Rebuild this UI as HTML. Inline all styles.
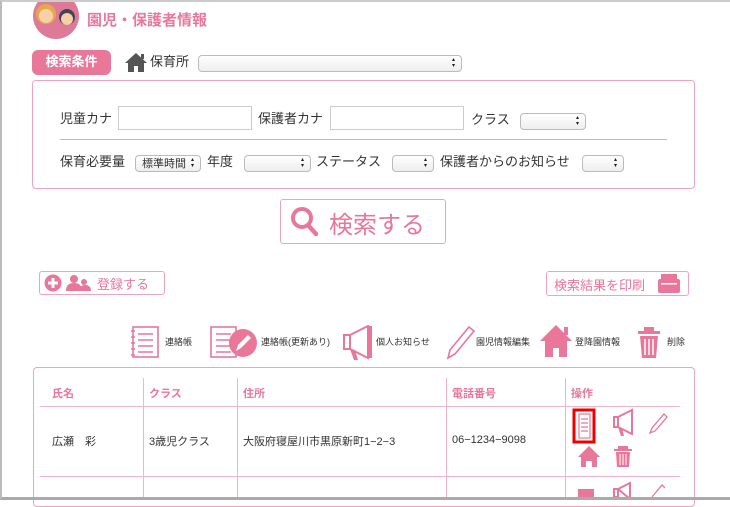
<!DOCTYPE html>
<html><head><meta charset="utf-8"><style>
*{box-sizing:border-box;margin:0;padding:0}
body{width:730px;height:500px;overflow:hidden;background:#fff;font-family:"Liberation Sans","Noto Sans CJK JP",sans-serif;color:#333;position:relative}
.a{position:absolute}
.frame{left:0;top:0;width:730px;height:500px;border-left:2px solid #bbb;border-top:2px solid #ccc;border-bottom:3px solid #aaa;z-index:5}
.pk{color:#e8779a}
.sel{position:absolute;height:17px;border:1px solid #bbb;border-radius:4px;background:linear-gradient(#fff,#eee);font-size:11px}
.sel:after{content:"▴▾";position:absolute;right:4px;top:1px;font-size:6px;line-height:6px;width:5px;color:#222;word-break:break-all}
.inp{position:absolute;height:24px;border:1px solid #ccc;background:#fff}
.lb{position:absolute;font-size:13px;color:#333;line-height:16px}
.btn{position:absolute;border:1.5px solid #eea4ba;border-radius:3px;background:#fff;color:#e8779a}
.th{position:absolute;top:385px;font-size:11px;font-weight:bold;color:#e8779a}
.td{position:absolute;top:433px;font-size:11px;color:#333}
.vl{position:absolute;top:378px;width:1px;height:122px;background:#f2b4c6}
.hl{position:absolute;left:40px;width:640px;height:1px;background:#f2b4c6}
.leg{position:absolute;top:335px;font-size:9px;color:#333}
</style></head><body>
<div class="a frame"></div>
<svg class="a" style="left:32px;top:-6px" width="48" height="48" viewBox="0 0 48 48">
<circle cx="24" cy="22" r="23" fill="#de7a98"/>
<circle cx="14" cy="20" r="10" fill="#e3a94a"/><circle cx="14" cy="22" r="7" fill="#f7d0a8"/>
<circle cx="35" cy="23" r="8" fill="#445"/><circle cx="35" cy="25" r="6" fill="#f7d0a8"/>
</svg>
<div class="a pk" style="left:87px;top:9px;font-size:15px;font-weight:bold">園児・保護者情報</div>
<div class="a" style="left:32px;top:50px;width:79px;height:25px;background:#e8779a;border-radius:6px;color:#fff;font-size:13px;font-weight:bold;text-align:center;line-height:24px">検索条件</div>
<svg class="a" style="left:125px;top:52px" width="22" height="20" viewBox="0 0 22 20"><path d="M11 1L0 11h3v9h6v-6h4v6h6v-9h3z" fill="#555"/><rect x="16" y="2" width="3" height="5" fill="#555"/></svg>
<div class="lb" style="left:150px;top:54px">保育所</div>
<div class="sel" style="left:198px;top:55px;width:264px"></div>
<div class="a" style="left:32px;top:80px;width:663px;height:109px;border:1px solid #eea4ba;border-radius:4px"></div>
<div class="lb" style="left:60px;top:111px">児童カナ</div>
<div class="inp" style="left:118px;top:106px;width:134px"></div>
<div class="lb" style="left:258px;top:111px">保護者カナ</div>
<div class="inp" style="left:330px;top:106px;width:134px"></div>
<div class="lb" style="left:471px;top:112px">クラス</div>
<div class="sel" style="left:520px;top:113px;width:66px"></div>
<div class="a" style="left:60px;top:139px;width:607px;height:1px;background:#eea4ba"></div>
<div class="lb" style="left:60px;top:154px">保育必要量</div>
<div class="sel" style="left:135px;top:155px;width:66px;padding-left:6px;line-height:16px">標準時間</div>
<div class="lb" style="left:207px;top:154px">年度</div>
<div class="sel" style="left:244px;top:155px;width:67px"></div>
<div class="lb" style="left:316px;top:154px">ステータス</div>
<div class="sel" style="left:392px;top:155px;width:42px"></div>
<div class="lb" style="left:440px;top:154px">保護者からのお知らせ</div>
<div class="sel" style="left:582px;top:155px;width:42px"></div>
<div class="btn" style="left:280px;top:199px;width:166px;height:45px"></div>
<svg class="a" style="left:290px;top:206px" width="30" height="32" viewBox="0 0 30 32"><circle cx="12" cy="12" r="9" fill="none" stroke="#e8779a" stroke-width="4"/><path d="M18 19l8 9" stroke="#e8779a" stroke-width="4.5" stroke-linecap="round"/></svg>
<div class="a pk" style="left:329px;top:205px;font-size:24px">検索する</div>
<div class="btn" style="left:39px;top:271px;width:126px;height:24px"></div>
<svg class="a" style="left:44px;top:274px" width="48" height="18" viewBox="0 0 48 18"><circle cx="9" cy="9" r="8.5" fill="#e8779a"/><path d="M9 4v10M4 9h10" stroke="#fff" stroke-width="3"/><circle cx="30" cy="5" r="4" fill="#e8779a"/><path d="M22 17c0-6 3-8 8-8s8 2 8 8z" fill="#e8779a"/><circle cx="40" cy="8" r="3" fill="#e8779a"/><path d="M36 17c0-5 2-6 5-6s6 1 6 6z" fill="#e8779a"/></svg>
<div class="a pk" style="left:97px;top:274px;font-size:13px">登録する</div>
<div class="btn" style="left:546px;top:271px;width:143px;height:25px"></div>
<div class="a pk" style="left:554px;top:275px;font-size:13px">検索結果を印刷</div>
<svg class="a" style="left:658px;top:274px" width="22" height="19" viewBox="0 0 22 19"><rect x="3" y="0" width="16" height="8" fill="#e8779a"/><rect x="0" y="5" width="22" height="14" rx="2" fill="#e8779a"/><rect x="3" y="9" width="16" height="1.5" fill="#fff"/></svg>
<svg class="a" style="left:130px;top:325px" width="560" height="36" viewBox="0 0 560 36">
<g fill="none" stroke="#e8779a" stroke-width="1.6"><rect x="3" y="2" width="25" height="30"/><path d="M8 9h15M8 15h15M8 21h15M8 27h15M1 6h4M1 12h4M1 18h4M1 24h4M1 30h4"/>
<rect x="81" y="2" width="25" height="30"/><path d="M86 9h15M86 15h15M86 21h15M86 27h15"/></g>
<circle cx="113" cy="18" r="14" fill="#e8779a"/><path d="M106 26l2-6 10-10 3 3-10 10z" fill="#fff"/>
<path d="M214 10h6v14h-6zM220 10l18-9v32l-18-9z" fill="none" stroke="#e8779a" stroke-width="2"/><path d="M220 24l4 11h4l-3-10z" fill="#e8779a"/><rect x="238" y="1" width="4" height="32" fill="#e8779a"/>
<path d="M318 33l2-8 19-23 5 4-19 23z" fill="none" stroke="#e8779a" stroke-width="1.6"/>
<path d="M426 0L410 16h5v16h8v-9h6v9h8V16h5z" fill="#e8779a"/><rect x="434" y="2" width="4" height="8" fill="#e8779a"/>
<path d="M508 6h22v3h-22zM514 2h10v4h-10z" fill="#e8779a"/><path d="M510 11h18l-2 22h-14z" fill="#e8779a"/><path d="M515 14v16M519 14v16M523 14v16" stroke="#fff" stroke-width="1.5"/>
</svg>
<div class="leg" style="left:165px">連絡帳</div>
<div class="leg" style="left:261px">連絡帳(更新あり)</div>
<div class="leg" style="left:376px">個人お知らせ</div>
<div class="leg" style="left:476px">園児情報編集</div>
<div class="leg" style="left:575px">登降園情報</div>
<div class="leg" style="left:667px">削除</div>
<div class="a" style="left:33px;top:367px;width:662px;height:140px;border:1px solid #eea4ba;border-radius:4px"></div>
<div class="vl" style="left:143px"></div><div class="vl" style="left:237px"></div><div class="vl" style="left:446px"></div><div class="vl" style="left:565px"></div>
<div class="hl" style="top:406px"></div><div class="hl" style="top:476px"></div>
<div class="th" style="left:52px">氏名</div><div class="th" style="left:149px">クラス</div><div class="th" style="left:243px">住所</div><div class="th" style="left:452px">電話番号</div><div class="th" style="left:571px">操作</div>
<div class="td" style="left:52px">広瀬　彩</div><div class="td" style="left:149px">3歳児クラス</div><div class="td" style="left:243px">大阪府寝屋川市黒原新町1−2−3</div><div class="td" style="left:452px;top:434px">06−1234−9098</div>
<svg class="a" style="left:570px;top:405px" width="110" height="95" viewBox="0 0 110 95">
<rect x="4" y="5" width="20" height="32" fill="none" stroke="#e00" stroke-width="3"/>
<g fill="none" stroke="#e8779a" stroke-width="1.2"><rect x="9" y="9" width="11" height="24"/><path d="M11 14h7M11 18h7M11 22h7M11 26h7"/></g>
<path d="M44 12h4v10h-4zM48 12l14-7v24l-14-7z" fill="none" stroke="#e8779a" stroke-width="2"/><path d="M48 22l3 9h3l-2-8z" fill="#e8779a"/>
<path d="M80 28l2-5 12-14 3 3-12 14z" fill="none" stroke="#e8779a" stroke-width="1.3"/>
<path d="M19 41L8 52h3v10h5v-6h6v6h5V52h3z" fill="#e8779a"/>
<path d="M44 44h18v2h-18zM48 41h10v3h-10zM46 47h14l-1 15h-12z" fill="#e8779a"/><path d="M50 49v11M53 49v11M56 49v11" stroke="#fff" stroke-width="1"/>
<rect x="8" y="84" width="16" height="12" fill="#e8779a"/><path d="M44 84h4v8h-4zM48 84l12-6v16z" fill="none" stroke="#e8779a" stroke-width="2"/><path d="M82 92l10-12 3 3" fill="none" stroke="#e8779a" stroke-width="1.3"/>
</svg>
</body></html>
